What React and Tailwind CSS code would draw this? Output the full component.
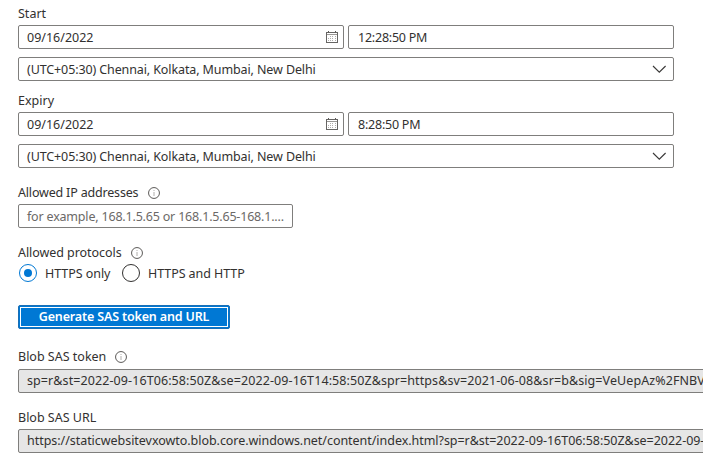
import React from "react";

const CalendarIcon = () => (
  <svg className="shrink-0" width="12" height="12" viewBox="0 0 12 12" fill="none" shapeRendering="crispEdges">
    <path d="M0.5 1.5h11v10h-11z" stroke="#666563" />
    <path d="M1 3.5h10" stroke="#9a9896" />
    <path d="M2.5 0v2M9.5 0v2" stroke="#605e5c" />
    <path d="M2.5 7v4M4.5 5v5M6.5 5v5M9.5 5v5" stroke="#b0aeac" strokeDasharray="1 1" />
  </svg>
);

const Chevron = () => (
  <svg className="shrink-0" width="14" height="8" viewBox="0 0 14 8" fill="none">
    <path d="M1 1 7.3 7.2 13.6 1" stroke="#3b3a39" strokeWidth="1.15" />
  </svg>
);

const InfoIcon = () => (
  <svg className="shrink-0" width="12" height="12" viewBox="0 0 12 12" fill="none">
    <circle cx="6" cy="6" r="5.45" stroke="#5c5a58" />
    <path d="M6 3v1M6 5v4" stroke="#b0aeac" />
  </svg>
);

const box = "flex h-6 items-center rounded-[2px] border border-[#7f7e7c] px-2";

function DateGroup({ label, time }) {
  return (
    <section className="flex h-[87px] flex-col">
      <div className="flex h-[25px] items-center pt-[3px]">{label}</div>
      <div className="flex gap-1">
        <div className={`${box} w-[326px] justify-between pr-[5px]!`}>
          <span className="pt-px">09/16/2022</span>
          <CalendarIcon />
        </div>
        <div className={`${box} w-[326px] pl-[9px]!`}>
          <span className="pt-px tracking-[-0.23px]">{time}</span>
        </div>
      </div>
      <div className={`${box} mt-2 w-[656px] justify-between pr-[7px]!`}>
        <span className="pt-px tracking-[-0.11px]">(UTC+05:30) Chennai, Kolkata, Mumbai, New Delhi</span>
        <Chevron />
      </div>
    </section>
  );
}

export default function App() {
  return (
    <main className="h-[462px] w-[703px] overflow-hidden bg-white pl-[18px] font-['Noto_Sans',sans-serif] text-[12.5px] leading-4 whitespace-nowrap text-[#323130]">
      <DateGroup label="Start" time="12:28:50 PM" />
      <DateGroup label="Expiry" time="8:28:50 PM" />

      <div className="flex h-[30px] items-center gap-[10px] pt-2">
        <span className="tracking-[-0.18px]">Allowed IP addresses</span>
        <InfoIcon />
      </div>
      <div className={`${box} w-[275px] text-[#6b6967]`}>
        <span className="pt-px tracking-[-0.19px]">for example, 168.1.5.65 or 168.1.5.65-168.1....</span>
      </div>

      <div className="mt-[17px] flex h-4 items-center gap-[9px]">
        <span className="tracking-[-0.06px]">Allowed protocols</span>
        <InfoIcon />
      </div>
      <div className="mt-[3px] flex h-[18px] items-center pl-[1px]">
        <div className="flex w-[103px] items-center gap-2">
          <span className="flex size-[18px] shrink-0 items-center justify-center rounded-full border border-[#0078d4]">
            <span className="size-2 rounded-full bg-[#0078d4]" />
          </span>
          <span className="pt-0.5 tracking-[-0.06px]">HTTPS only</span>
        </div>
        <div className="flex items-center gap-2">
          <span className="size-[18px] shrink-0 rounded-full border border-[#323130]" />
          <span className="pt-0.5 tracking-[-0.08px]">HTTPS and HTTP</span>
        </div>
      </div>

      <button className="mt-[23px] block h-6 w-[212px] rounded-[2px] border border-[#1b6fb5] bg-[#0078d4] p-px font-semibold text-white">
        <span className="flex h-5 items-center justify-center border border-white tracking-[-0.15px]">Generate SAS token and URL</span>
      </button>

      <div className="mt-[18px] flex h-[22px] items-center gap-[9px] pb-[2px]">
        <span>Blob SAS token</span>
        <InfoIcon />
      </div>
      <div className={`${box} w-[720px] bg-[#e6e6e6]`}>
        <span className="tracking-[0.09px]">sp=r&amp;st=2022-09-16T06:58:50Z&amp;se=2022-09-16T14:58:50Z&amp;spr=https&amp;sv=2021-06-08&amp;sr=b&amp;sig=VeUepAz%2FNBV</span>
      </div>

      <div className="mt-[14px] flex h-[22px] items-center pb-px">Blob SAS URL</div>
      <div className={`${box} w-[720px] bg-[#e6e6e6]`}>
        <span className="tracking-[-0.04px]">https://staticwebsitevxowto.blob.core.windows.net/content/index.html?sp=r&amp;st=2022-09-16T06:58:50Z&amp;se=2022-09-</span>
      </div>
    </main>
  );
}
